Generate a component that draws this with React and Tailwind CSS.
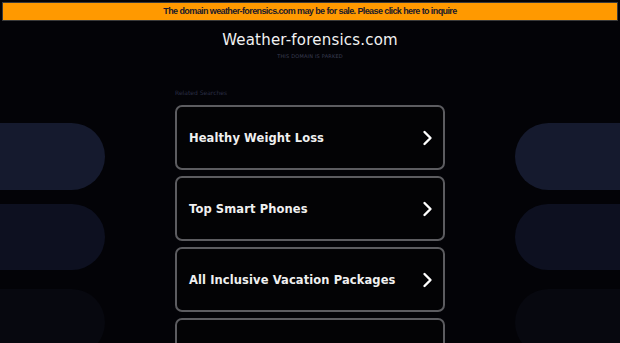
import React from "react";

const items = [
  "Healthy Weight Loss",
  "Top Smart Phones",
  "All Inclusive Vacation Packages",
  "Credit Card Offers",
];

function Chevron() {
  return (
    <svg width="12" height="16" viewBox="0 0 12 16" fill="none">
      <path d="M3.5 2 L9.5 8 L3.5 14" stroke="#ffffff" strokeWidth="2.4" strokeLinecap="round" strokeLinejoin="round" />
    </svg>
  );
}

export default function App() {
  return (
    <div className="relative w-[620px] h-[343px] overflow-hidden bg-[#030307]" style={{ fontFamily: "'DejaVu Sans', sans-serif" }}>
      {/* decorative pills */}
      <div className="absolute left-0 top-[123px] flex flex-col gap-[14px]">
        <div className="w-[105px] h-[67px] rounded-r-full bg-[#151a2e]" />
        <div className="w-[105px] h-[66px] rounded-r-full bg-[#0d1020]" />
        <div className="w-[105px] h-[67px] rounded-r-full bg-[#07080f] mt-[5px]" />
      </div>
      <div className="absolute right-0 top-[123px] flex flex-col gap-[14px]">
        <div className="w-[105px] h-[67px] rounded-l-full bg-[#151a2e]" />
        <div className="w-[105px] h-[66px] rounded-l-full bg-[#0d1020]" />
        <div className="w-[105px] h-[67px] rounded-l-full bg-[#07080f] mt-[5px]" />
      </div>

      <div className="relative flex flex-col">
        <div className="px-[2px] pt-[2px]">
          <div className="h-[19px] bg-[#ff9900] border border-[#3a3a3a] flex items-center justify-center">
            <span className="text-[9px] font-bold text-[#1a1a2a] tracking-[-0.6px] whitespace-nowrap" style={{ fontFamily: "'Liberation Sans', Arial, sans-serif" }}>
              The domain weather-forensics.com may be for sale. Please click here to inquire
            </span>
          </div>
        </div>
        <div className="flex flex-col items-center mt-[10px]">
          <div className="text-[15px] leading-[18px] text-[#f2f2f2] tracking-[0.2px]">Weather-forensics.com</div>
          <div className="text-[5px] leading-[8px] mt-[3px] text-[#3b3f55] tracking-[0.2px]">THIS DOMAIN IS PARKED</div>
        </div>
        <div className="w-[270px] mx-auto mt-[29px]">
          <div className="text-[6px] leading-[8px] text-[#2a2e45] mb-[8px]">Related Searches</div>
          <div className="flex flex-col gap-[6px]">
            {items.map((t) => (
              <div key={t} className="h-[65px] rounded-[7px] border-2 border-[#5c5c60] bg-[#030305] flex items-center justify-between pl-[12px] pr-[10px]">
                <span className="text-[11.5px] font-bold text-[#f0f0f0] tracking-[0.1px] whitespace-nowrap mt-[2px]">{t}</span>
                <Chevron />
              </div>
            ))}
          </div>
        </div>
      </div>
    </div>
  );
}
